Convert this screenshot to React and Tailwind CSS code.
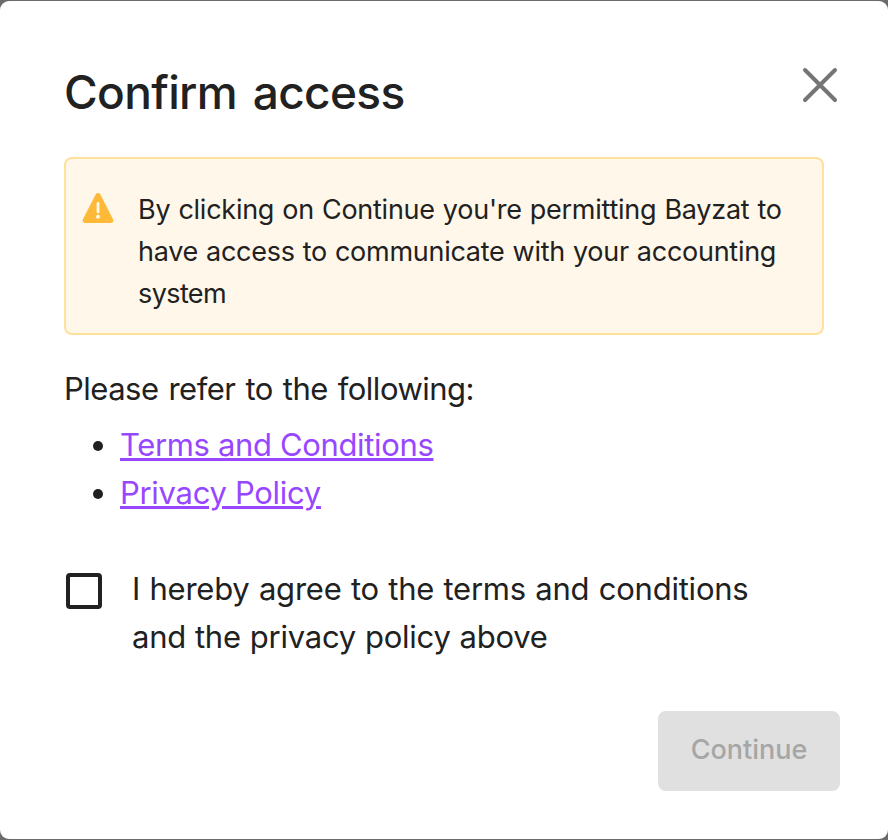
function Line({ className, children }) {
  return <span className={"block whitespace-nowrap " + className}>{children}</span>;
}

export default function App() {
  return (
    <div className="h-[840px] w-[888px] bg-[#6b6b6b] py-px font-['Inter',sans-serif] text-[#212121]">
      <main className="flex h-[838px] flex-col rounded-[9px] bg-white pt-[60px] pr-12 pl-16">
        <header className="flex h-24 items-start justify-between">
          <h1 className="text-[46px] leading-[62px] font-medium tracking-[-0.65px] [word-spacing:4px]">Confirm access</h1>
          <button aria-label="Close" className="mt-1.5">
            <svg width="40" height="36" viewBox="0 0 40 36" fill="none" stroke="#757575" strokeWidth="4" strokeLinecap="round">
              <path d="M5 3 35 33M35 3 5 33" />
            </svg>
          </button>
        </header>
        <section className="mr-4 flex h-[178px] gap-[24px] rounded-lg border-2 border-[#ffe09c] bg-[#fff7ea] pt-[30px] pl-4 text-[27px] leading-[42px]">
          <svg className="mt-[3px] shrink-0" width="32" height="32" viewBox="0 0 32 32">
            <path d="M16 3.5 3.2 28.5H28.8Z" fill="#ffb938" stroke="#ffb938" strokeWidth="5" strokeLinejoin="round" />
            <path d="M16 11.5V20" stroke="#fff7ea" strokeWidth="2.8" strokeLinecap="round" />
            <circle cx="16" cy="24.8" r="2" fill="#fff7ea" />
          </svg>
          <p>
            <Line className="tracking-[-0.25px] [word-spacing:0.7px]">By clicking on Continue you're permitting Bayzat to</Line>
            <Line className="tracking-[-0.27px] [word-spacing:0.7px]">have access to communicate with your accounting</Line>
            <Line className="tracking-[-0.6px]">system</Line>
          </p>
        </section>
        <div className="mt-[30px] text-[31px] leading-[48px]">
          <p className="tracking-[-0.5px] [word-spacing:1.7px]">Please refer to the following:</p>
          <ul className="mt-2 text-[#9747ff]">
            <li className="flex items-center pl-[29px]">
              <span className="mt-0.5 mr-[17px] size-2.5 rounded-full bg-[#212121]" />
              <a href="#" className="tracking-[-0.35px] underline decoration-[3px] underline-offset-[2px]">Terms and Conditions</a>
            </li>
            <li className="flex items-center pl-[29px]">
              <span className="mt-0.5 mr-[17px] size-2.5 rounded-full bg-[#212121]" />
              <a href="#" className="tracking-[-0.3px] underline decoration-[3px] underline-offset-[2px]">Privacy Policy</a>
            </li>
          </ul>
          <label className="mt-12 flex gap-[30px] pl-0.5">
            <span className="mt-2 size-9 shrink-0 rounded-[4px] border-4 border-[#212121]" />
            <span>
              <Line className="tracking-[-0.22px] [word-spacing:0.85px]">I hereby agree to the terms and conditions</Line>
              <Line className="tracking-[-0.24px] [word-spacing:0.5px]">and the privacy policy above</Line>
            </span>
          </label>
        </div>
        <button className="mt-[50px] h-20 w-[182px] shrink-0 self-end rounded-lg bg-[#e0e0e0] pb-0.5 text-[27px] font-medium text-[#a6a6a6]">Continue</button>
      </main>
    </div>
  );
}
